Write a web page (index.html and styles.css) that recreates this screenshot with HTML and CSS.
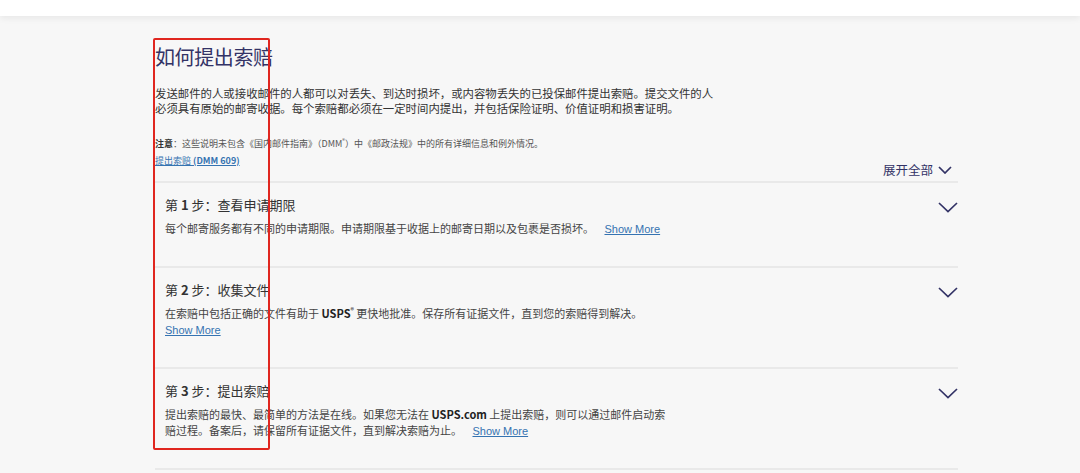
FILE: index.html
```html
<!DOCTYPE html>
<html lang="zh-CN">

<head>
    <meta charset="UTF-8">
    <meta name="viewport" content="width=device-width, initial-scale=1.0">
    <title>如何提出索赔</title>
    <link rel="stylesheet" href="styles.css">
</head>

<body>

    <!-- Top bar -->
    <div class="top-bar"></div>

    <main class="claims">
        <h1 class="claims-title">如何提出索赔</h1>
        <p class="claims-intro">发送邮件的人或接收邮件的人都可以对丢失、到达时损坏，或内容物丢失的已投保邮件提出索赔。提交文件的人必须具有原始的邮寄收据。每个索赔都必须在一定时间内提出，并包括保险证明、价值证明和损害证明。</p>

        <div class="claims-toolbar">
            <div class="claims-notes">
                <p class="note"><strong>注意</strong>：这些说明未包含《国内邮件指南》（DMM<sup>®</sup>）中《邮政法规》中的所有详细信息和例外情况。</p>
                <a class="dmm-link" href="#">提出索赔 <strong>(DMM 609)</strong></a>
            </div>
            <button class="expand-all">展开全部
                <svg width="14" height="8" viewBox="0 0 14 8"><polyline points="1,1 7,7 13,1" /></svg>
            </button>
        </div>

        <!-- Steps -->
        <section class="step">
            <div class="step-body">
                <h2>第 <b>1</b> 步：查看申请期限</h2>
                <p>每个邮寄服务都有不同的申请期限。申请期限基于收据上的邮寄日期以及包裹是否损坏。 <a class="show-more" href="#">Show More</a></p>
            </div>
            <svg class="chevron" width="20" height="11" viewBox="0 0 20 11"><polyline points="1,1 10,9.5 19,1" /></svg>
        </section>

        <section class="step">
            <div class="step-body">
                <h2>第 <b>2</b> 步：收集文件</h2>
                <p>在索赔中包括正确的文件有助于 <strong>USPS<sup>®</sup></strong> 更快地批准。保存所有证据文件，直到您的索赔得到解决。<br><a class="show-more first" href="#">Show More</a></p>
            </div>
            <svg class="chevron" width="20" height="11" viewBox="0 0 20 11"><polyline points="1,1 10,9.5 19,1" /></svg>
        </section>

        <section class="step">
            <div class="step-body">
                <h2>第 <b>3</b> 步：提出索赔</h2>
                <p>提出索赔的最快、最简单的方法是在线。如果您无法在 <strong>USPS.com</strong> 上提出索赔，则可以通过邮件启动索<br>赔过程。备案后，请保留所有证据文件，直到解决索赔为止。 <a class="show-more" href="#">Show More</a></p>
            </div>
            <svg class="chevron" width="20" height="11" viewBox="0 0 20 11"><polyline points="1,1 10,9.5 19,1" /></svg>
        </section>
        <div class="step-end"></div>

        <!-- Annotation frame -->
        <div class="highlight-box"></div>
    </main>

</body>

</html>
```

FILE: styles.css
```css
/* Basis */
body,
html {
    margin: 0;
    padding: 0;
    background-color: #f7f7f7;
    color: #333;
    font-family: "Noto Sans CJK SC", "Liberation Sans", sans-serif;
}

.top-bar {
    height: 16px;
    background: #fff;
    box-shadow: 0 2px 7px rgba(0, 0, 0, 0.07);
}

.claims {
    position: relative;
    width: 803px;
    margin-left: 155px;
    padding-top: 27px;
}

.claims-title {
    margin: 0;
    font-size: 20px;
    line-height: 28px;
    font-weight: 400;
    color: #333366;
    letter-spacing: -0.4px;
}

.claims-intro {
    margin: 15px 0 0;
    max-width: 560px;
    font-size: 11.4px;
    line-height: 15px;
    color: #333;
}

/* Note + expand all */
.claims-toolbar {
    display: flex;
    justify-content: space-between;
    align-items: flex-end;
    margin-top: 21px;
}

.claims-notes {
    padding-bottom: 14px;
    font-size: 9px;
    line-height: 13px;
}

.note {
    margin: 0;
    color: #555;
}

.note strong {
    color: #333;
}

sup {
    font-size: 0.6em;
    line-height: 0;
    vertical-align: 0.7em;
}

.dmm-link {
    display: block;
    margin-top: 4px;
    color: #3573b1;
}

.expand-all {
    display: flex;
    align-items: center;
    gap: 5px;
    margin: 0 6px 2px 0;
    padding: 0;
    border: none;
    background: none;
    font-family: inherit;
    font-size: 12.5px;
    line-height: 18px;
    color: #333366;
    cursor: pointer;
}

.expand-all svg,
.chevron {
    fill: none;
    stroke: #333366;
    stroke-width: 1.7;
}

/* Steps */
.step {
    display: flex;
    justify-content: space-between;
    align-items: flex-start;
    padding: 14px 0 28px 10px;
    border-top: 2px solid #e9e9e9;
}

.step-end {
    border-top: 2px solid #e9e9e9;
}

.step h2 {
    margin: 0;
    font-size: 13px;
    line-height: 16px;
    font-weight: 400;
    color: #333;
}

.step p {
    margin: 7px 0 0;
    font-size: 11px;
    line-height: 16.5px;
    color: #444;
}

.step p strong {
    color: #222;
}

.show-more {
    margin-left: 8px;
    font-family: "Liberation Sans", sans-serif;
    font-size: 11px;
    color: #3573b1;
}

.show-more.first {
    margin-left: 0;
}

.chevron {
    margin-top: 5px;
}

/* Rood kader */
.highlight-box {
    position: absolute;
    left: -2px;
    top: 22px;
    width: 113px;
    height: 408px;
    border: 2px solid #e0261f;
    border-radius: 2px;
}
```
